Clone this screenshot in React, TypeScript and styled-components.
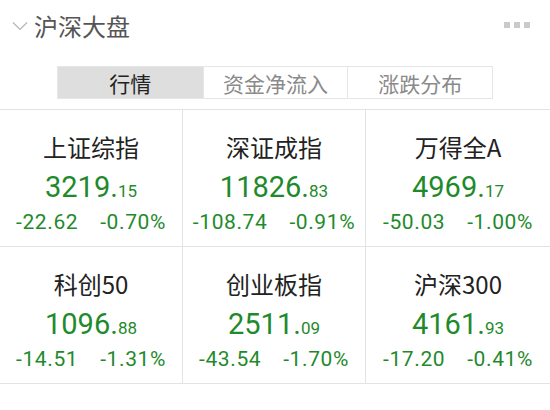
import { FC } from "react";
import styled, { createGlobalStyle } from "styled-components";

const GlobalStyle = createGlobalStyle`
  body {
    margin: 0;
    background: #fff;
    font-family: Roboto, "Noto Sans CJK SC", sans-serif;
  }
`;

interface IndexItem {
  name: string;
  int: string;
  dec: string;
  change: string;
  pct: string;
}

const items: IndexItem[] = [
  { name: "上证综指", int: "3219", dec: "15", change: "-22.62", pct: "-0.70%" },
  { name: "深证成指", int: "11826", dec: "83", change: "-108.74", pct: "-0.91%" },
  { name: "万得全A", int: "4969", dec: "17", change: "-50.03", pct: "-1.00%" },
  { name: "科创50", int: "1096", dec: "88", change: "-14.51", pct: "-1.31%" },
  { name: "创业板指", int: "2511", dec: "09", change: "-43.54", pct: "-1.70%" },
  { name: "沪深300", int: "4161", dec: "93", change: "-17.20", pct: "-0.41%" },
];

const tabs = ["行情", "资金净流入", "涨跌分布"];

const App: FC = () => {
  return (
    <Page>
      <GlobalStyle />
      <Header>
        <TitleWrap>
          <Chevron viewBox="0 0 16 10">
            <path d="M1 1.5 L8 8.5 L15 1.5" fill="none" stroke="#b5b5b5" strokeWidth="1.2" />
          </Chevron>
          <Title>沪深大盘</Title>
        </TitleWrap>
        <Dots>
          <Dot />
          <Dot />
          <Dot />
        </Dots>
      </Header>
      <TabBar>
        {tabs.map((t, i) => (
          <Tab key={t} active={i === 0}>{t}</Tab>
        ))}
      </TabBar>
      <Grid>
        {items.map((it, i) => (
          <Cell key={it.name} lastCol={i % 3 === 2}>
            <Name>{it.name}</Name>
            <Value>
              {it.int}.<small>{it.dec}</small>
            </Value>
            <Changes>
              <span>{it.change}</span>
              <span>{it.pct}</span>
            </Changes>
          </Cell>
        ))}
      </Grid>
    </Page>
  );
};

const Page = styled.div`
  width: 550px;
  height: 410px;
  overflow: hidden;
  background: #fff;
`;

const Header = styled.div`
  height: 50px;
  display: flex;
  align-items: center;
  justify-content: space-between;
  padding: 0 20px 0 12px;
`;

const TitleWrap = styled.div`
  display: flex;
  align-items: center;
  gap: 6px;
`;

const Chevron = styled.svg`
  width: 16px;
  height: 10px;
  margin-top: 2px;
`;

const Title = styled.h1`
  margin: 0;
  font-family: "Noto Sans CJK SC", sans-serif;
  font-weight: 400;
  font-size: 24px;
  color: #555;
`;

const Dots = styled.div`
  display: flex;
  gap: 4px;
`;

const Dot = styled.span`
  width: 6px;
  height: 6px;
  background: #cacaca;
`;

const TabBar = styled.div`
  margin: 16px 0 0 57px;
  width: 436px;
  height: 33px;
  display: grid;
  grid-template-columns: repeat(3, 1fr);
  border: 1px solid #e6e6e6;
  box-sizing: border-box;
`;

const Tab = styled.div<{ active?: boolean }>`
  display: flex;
  align-items: center;
  justify-content: center;
  font-family: "Noto Sans CJK SC", sans-serif;
  font-size: 21px;
  background: ${({ active }) => (active ? "#dedede" : "#fff")};
  color: ${({ active }) => (active ? "#222" : "#8a8a8a")};
  & + & {
    border-left: 1px solid #e6e6e6;
  }
`;

const Grid = styled.div`
  margin-top: 10px;
  display: grid;
  grid-template-columns: 183px 183px 184px;
  grid-auto-rows: 137px;
  border-top: 1px solid #e3e3e3;
`;

const Cell = styled.div<{ lastCol?: boolean }>`
  display: flex;
  flex-direction: column;
  align-items: center;
  border-right: ${({ lastCol }) => (lastCol ? "none" : "1px solid #e3e3e3")};
  border-bottom: 1px solid #e3e3e3;
  box-sizing: border-box;
`;

const Name = styled.div`
  margin-top: 20px;
  font-family: "Noto Sans CJK SC", sans-serif;
  font-size: 24px;
  line-height: 34px;
  color: #222;
`;

const Value = styled.div`
  margin-top: 5px;
  font-size: 29px;
  line-height: 36px;
  color: #1f8a2c;

  small {
    font-size: 17px;
  }
`;

const Changes = styled.div`
  display: flex;
  gap: 22px;
  margin-top: -2px;
  font-size: 21px;
  line-height: 30px;
  letter-spacing: 0.6px;
  color: #1f8a2c;
`;

export default App;
